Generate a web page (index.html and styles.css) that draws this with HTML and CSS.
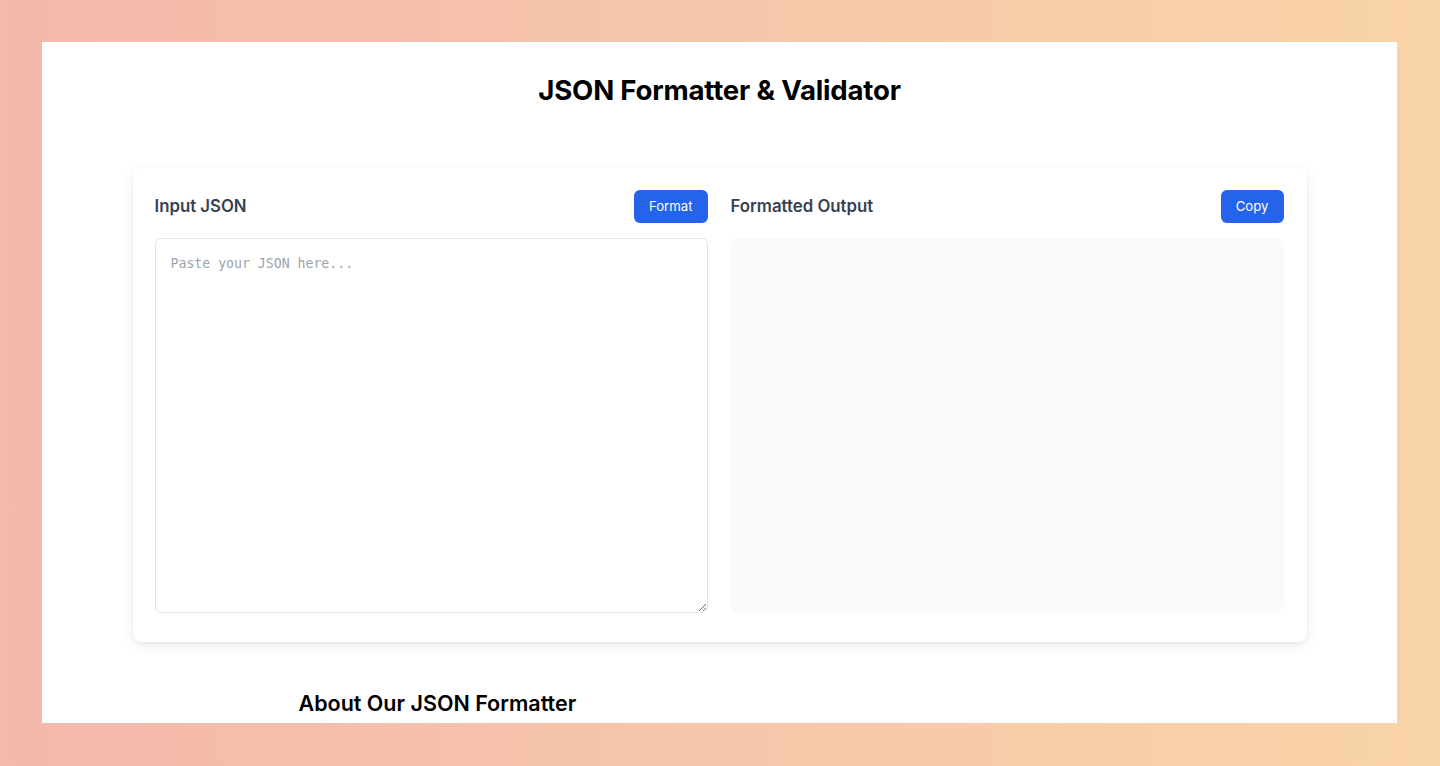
FILE: index.html
```html
<!DOCTYPE html>
<html lang="en">
<head>
<meta charset="utf-8">
<title>JSON Formatter &amp; Validator</title>
<link rel="stylesheet" href="styles.css">
</head>
<body>
<div class="frame">
  <main class="page">
    <h1 class="title">JSON Formatter &amp; Validator</h1>
    <section class="card">
      <div class="col">
        <div class="col-head">
          <h2 class="label">Input JSON</h2>
          <button class="btn">Format</button>
        </div>
        <textarea class="input" placeholder="Paste your JSON here..."></textarea>
      </div>
      <div class="col">
        <div class="col-head">
          <h2 class="label">Formatted Output</h2>
          <button class="btn">Copy</button>
        </div>
        <pre class="output"></pre>
      </div>
    </section>
    <section class="about">
      <h2 class="about-title">About Our JSON Formatter</h2>
    </section>
  </main>
</div>
</body>
</html>
```

FILE: styles.css
```css
* { box-sizing: border-box; }
html, body { margin: 0; padding: 0; }
body {
  width: 1440px;
  height: 766px;
  overflow: hidden;
  background: linear-gradient(90deg, #f4b8ac 0%, #f6c6aa 50%, #f9d4a7 100%);
  font-family: Inter, "Noto Sans", sans-serif;
}
.frame {
  padding: 42px 43px 43px 42px;
  height: 766px;
}
.page {
  background: #ffffff;
  height: 681px;
  overflow: hidden;
  padding-top: 31px;
}
.title {
  margin: 0;
  text-align: center;
  font-size: 27.6px;
  line-height: 34px;
  font-weight: 700;
  color: #000;
  letter-spacing: -0.2px;
}
.card {
  width: 1174px;
  margin: 61px auto 0;
  background: #fff;
  border-radius: 8px;
  box-shadow: 0 4px 12px rgba(0,0,0,0.08), 0 1px 3px rgba(0,0,0,0.05);
  padding: 22px 23px 29px 22px;
  display: grid;
  grid-template-columns: 1fr 1fr;
  gap: 23px;
}
.col { display: flex; flex-direction: column; }
.col-head {
  display: flex;
  align-items: center;
  justify-content: space-between;
  height: 32px;
  margin-bottom: 16px;
}
.label {
  margin: 0;
  font-size: 16.8px;
  font-weight: 600;
  color: #374151;
}
.btn {
  height: 33px;
  padding: 0 15px;
  border: none;
  border-radius: 6px;
  background: #2563eb;
  color: #fff;
  font-family: Inter, "Noto Sans", sans-serif;
  font-size: 13.2px;
  font-weight: 400;
}
.input {
  height: 375px;
  width: 100%;
  padding: 15px 15px;
  border: 1px solid #e2e4e9;
  border-radius: 6px;
  font-family: "DejaVu Sans Mono", "Liberation Mono", monospace;
  font-size: 13.2px;
  line-height: 20px;
  color: #111827;
  resize: vertical;
  outline: none;
}
.input::placeholder { color: #9ca3af; }
.output {
  margin: 0;
  height: 375px;
  background: #f9fafb;
  border-radius: 8px;
}
.about {
  width: 842px;
  margin: 47px auto 0;
}
.about-title {
  margin: 0;
  font-size: 21.5px;
  line-height: 28px;
  font-weight: 600;
  color: #000;
}
```
